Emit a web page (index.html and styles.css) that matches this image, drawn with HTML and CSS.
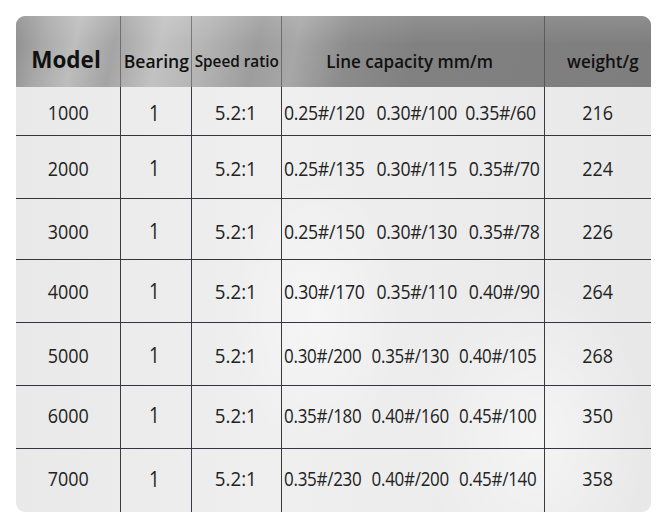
FILE: index.html
```html
<!DOCTYPE html>
<html>
<head>
<meta charset="utf-8">
<link rel="stylesheet" href="styles.css">
</head>
<body>
<div class="spec">
  <div class="row head">
    <div class="cell c-model"><span class="t">Model</span></div>
    <div class="cell c-bearing"><span class="t">Bearing</span></div>
    <div class="cell c-speed"><span class="t">Speed ratio</span></div>
    <div class="cell c-line"><span class="t">Line capacity mm/m</span></div>
    <div class="cell c-weight"><span class="t">weight/g</span></div>
  </div>
  <div class="row r1">
    <div class="cell"><span class="t">1000</span></div><div class="cell one"><span class="t">1</span></div><div class="cell speed"><span class="t">5.2:1</span></div>
    <div class="cell cap"><span class="g"><span>0.25#/120</span><span>0.30#/100</span><span class="tight">0.35#/60</span></span></div>
    <div class="cell"><span class="t">216</span></div>
  </div>
  <div class="row r2">
    <div class="cell"><span class="t">2000</span></div><div class="cell one"><span class="t">1</span></div><div class="cell speed"><span class="t">5.2:1</span></div>
    <div class="cell cap"><span class="g"><span>0.25#/135</span><span>0.30#/115</span><span>0.35#/70</span></span></div>
    <div class="cell"><span class="t">224</span></div>
  </div>
  <div class="row r3">
    <div class="cell"><span class="t">3000</span></div><div class="cell one"><span class="t">1</span></div><div class="cell speed"><span class="t">5.2:1</span></div>
    <div class="cell cap"><span class="g"><span>0.25#/150</span><span>0.30#/130</span><span>0.35#/78</span></span></div>
    <div class="cell"><span class="t">226</span></div>
  </div>
  <div class="row r4">
    <div class="cell"><span class="t">4000</span></div><div class="cell one"><span class="t">1</span></div><div class="cell speed"><span class="t">5.2:1</span></div>
    <div class="cell cap"><span class="g"><span>0.30#/170</span><span>0.35#/110</span><span>0.40#/90</span></span></div>
    <div class="cell"><span class="t">264</span></div>
  </div>
  <div class="row r5">
    <div class="cell"><span class="t">5000</span></div><div class="cell one"><span class="t">1</span></div><div class="cell speed"><span class="t">5.2:1</span></div>
    <div class="cell cap"><span class="g narrow"><span>0.30#/200</span><span>0.35#/130</span><span>0.40#/105</span></span></div>
    <div class="cell"><span class="t">268</span></div>
  </div>
  <div class="row r6">
    <div class="cell"><span class="t">6000</span></div><div class="cell one"><span class="t">1</span></div><div class="cell speed"><span class="t">5.2:1</span></div>
    <div class="cell cap"><span class="g narrow"><span>0.35#/180</span><span>0.40#/160</span><span>0.45#/100</span></span></div>
    <div class="cell"><span class="t">350</span></div>
  </div>
  <div class="row r7">
    <div class="cell"><span class="t">7000</span></div><div class="cell one"><span class="t">1</span></div><div class="cell speed"><span class="t">5.2:1</span></div>
    <div class="cell cap"><span class="g narrow"><span>0.35#/230</span><span>0.40#/200</span><span>0.45#/140</span></span></div>
    <div class="cell"><span class="t">358</span></div>
  </div>
</div>
</body>
</html>
```
FILE: styles.css
```css
html, body {
  margin: 0;
  padding: 0;
  background: #ffffff;
}
body {
  padding: 16px 0 0 16px;
  font-family: "Open Sans", "Noto Sans", sans-serif;
  color: #222;
}
.spec {
  width: 635px;
  border-radius: 9px;
  overflow: hidden;
  background:
    radial-gradient(ellipse 120px 200px at 300px 300px, rgba(255,255,255,0.45), rgba(255,255,255,0) 70%),
    radial-gradient(ellipse 160px 220px at 520px 420px, rgba(255,255,255,0.5), rgba(255,255,255,0) 70%),
    linear-gradient(90deg, #e9e9e9 0%, #efefef 40%, #ececec 70%, #e8e8e8 100%);
}
.row {
  display: grid;
  grid-template-columns: 104px 71px 90px 263px 107px;
}
.cell {
  display: flex;
  align-items: center;
  justify-content: center;
  font-size: 19.5px;
  border-left: 1px solid #3a3a44;
  white-space: nowrap;
  padding-top: 3px;
  box-sizing: border-box;
  min-width: 0;
}
.cell:first-child {
  border-left: none;
}
.t {
  display: inline-block;
  transform: scaleX(0.92);
}
.cell.speed .t {
  transform: scaleX(0.96);
  margin-left: -2px;
}
.cell.one .t {
  font-size: 22px;
  transform: scaleX(0.85);
  margin-right: 4px;
  margin-top: -2px;
}
.head {
  height: 71px;
  background:
    linear-gradient(180deg, rgba(255,255,255,0.12) 0%, rgba(255,255,255,0) 40%),
    linear-gradient(102deg, #8d8d8d 0%, #a9a9a9 5%, #bdbdbd 10%, #a4a4a4 16%, #c2c2c2 23%, #b4b4b4 30%, #9d9d9d 38%, #a7a7a7 44%, #8c8c8c 52%, #818181 62%, #7e7e7e 100%);
}
.head .cell {
  border-left-color: rgba(40,40,40,0.45);
  padding-top: 17px;
  color: #111;
  font-weight: 600;
  font-size: 18px;
}
.head .c-model {
  padding-top: 16px;
  padding-right: 4px;
}
.head .c-model .t {
  font-size: 22.5px;
  font-weight: 700;
  transform: none;
}
.head .c-bearing .t {
  font-size: 18.5px;
  transform: scaleX(0.95);
}
.head .c-speed .t {
  font-size: 17px;
  transform: scaleX(0.9);
}
.head .c-line {
  padding-right: 7px;
}
.head .c-line .t {
  font-size: 18.5px;
  transform: scaleX(0.92);
}
.head .c-weight {
  padding-left: 9px;
}
.head .c-weight .t {
  font-size: 18.5px;
  transform: scaleX(0.92);
}
.row + .row:not(.r1) {
  border-top: 1px solid #35353d;
}
.r1 { height: 48px; }
.r2 { height: 62px; }
.r3 { height: 60px; }
.r4 { height: 62px; }
.r5 { height: 62px; }
.r6 { height: 62px; }
.r7 { height: 63px; }
.r2 .cell { padding-top: 2px; }
.r3 .cell { padding-top: 4px; }
.r4 .cell { padding-top: 0; }
.r5 .cell { padding-top: 2px; }
.r6 .cell, .r7 .cell { padding-top: 0; padding-bottom: 4px; }
.cap {
  justify-content: flex-start;
  padding-left: 2px;
}
.g {
  display: flex;
  gap: 13px;
  letter-spacing: -0.3px;
  transform: scaleX(0.905);
  transform-origin: left center;
}
.g.narrow {
  gap: 11.5px;
  transform: scaleX(0.87);
}
.g .tight {
  margin-left: -4px;
}
```
